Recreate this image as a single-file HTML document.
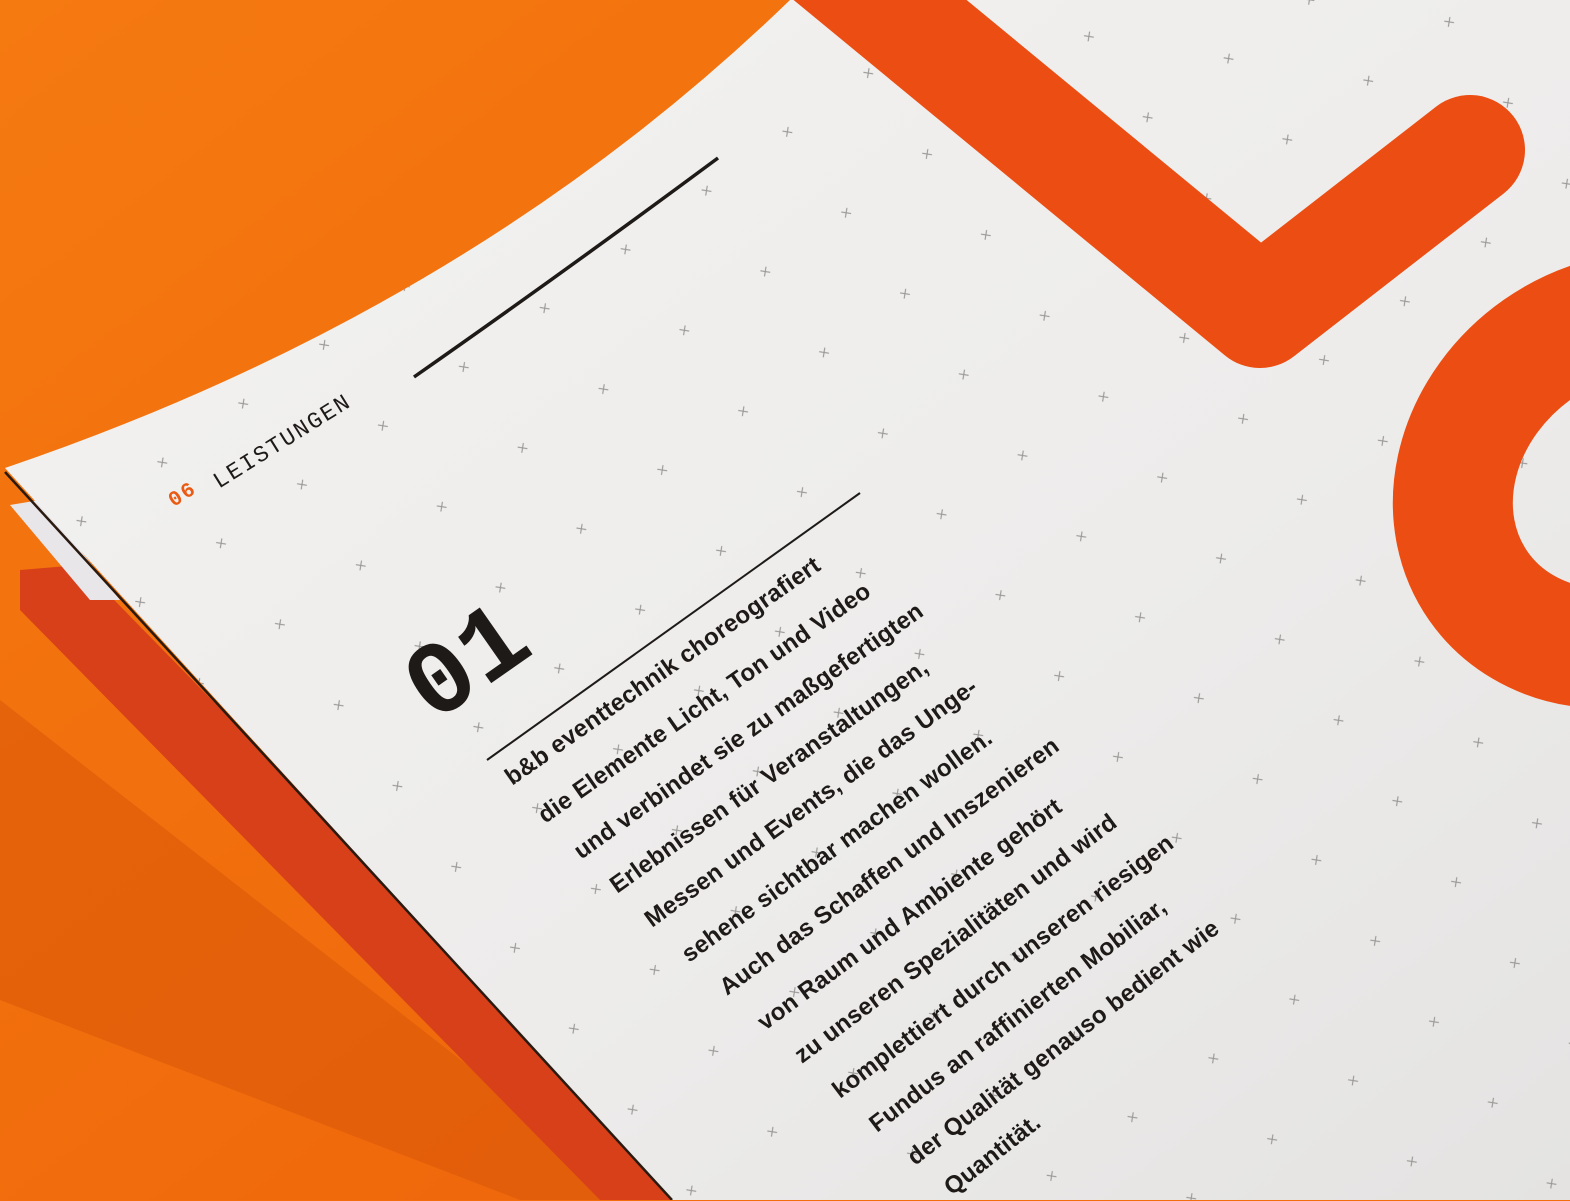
<!DOCTYPE html>
<html><head><meta charset="utf-8"><style>
html,body{margin:0;padding:0}
body{width:1570px;height:1200px;overflow:hidden;position:relative;background:#f36c0e;font-family:"Liberation Sans",sans-serif}
svg{position:absolute;left:0;top:0}
.t{position:absolute;white-space:nowrap;transform-origin:0 100%;font-weight:bold;color:#1e1a18;font-size:24px;line-height:24px;letter-spacing:0.3px}
</style></head><body>
<svg width="1570" height="1200" viewBox="0 0 1570 1200">
<defs>
<linearGradient id="bg" x1="0" y1="0" x2="1" y2="1">
<stop offset="0" stop-color="#f57a10"/><stop offset="0.6" stop-color="#f06a0c"/><stop offset="1" stop-color="#e8600a"/>
</linearGradient>
<linearGradient id="paper" x1="0" y1="0" x2="1" y2="1">
<stop offset="0" stop-color="#f3f2f0"/><stop offset="0.6" stop-color="#edeceb"/><stop offset="1" stop-color="#e4e3e2"/>
</linearGradient>
<pattern id="crs" width="100" height="100" patternUnits="userSpaceOnUse" patternTransform="rotate(-36) translate(10,20)">
<path d="M46 46l7 7M53 46l-7 7" stroke="#9a9896" stroke-width="1.2"/>
</pattern>
</defs>
<rect width="1570" height="1200" fill="url(#bg)"/>
<polygon points="0,700 0,1000 520,1200 640,1200" fill="#d85408" opacity="0.5"/>
<polygon points="20,570 80,565 700,1200 600,1200 20,610" fill="#d8401a"/>
<polygon points="10,505 40,500 120,600 90,600" fill="#e9e6ea"/>
<path d="M5,468 Q470,310 790,0 L1570,0 L1570,1200 L672,1200 Z" fill="url(#paper)"/>
<path d="M5,472 L672,1200" stroke="#2a1a10" stroke-width="2.5"/>
<path d="M5,468 Q470,310 790,0 L1570,0 L1570,1200 L672,1200 Z" fill="url(#crs)"/>
<polyline points="800,-66 1260,313 1470,150" fill="none" stroke="#ec4d12" stroke-width="110" stroke-linecap="round" stroke-linejoin="round"/>
<ellipse cx="1630" cy="480" rx="185" ry="160" transform="rotate(-35 1630 480)" fill="none" stroke="#ec4d12" stroke-width="120"/>
<path d="M414,377 Q560,275 718,158" stroke="#1e1a18" stroke-width="3.5" fill="none"/>
<path d="M487,760 Q670,630 860,493" stroke="#1e1a18" stroke-width="2" fill="none"/>
</svg>
<div class="t" style="left:178px;top:490px;font-family:'Liberation Mono',monospace;font-size:21px;letter-spacing:2px;font-weight:normal;transform:rotate(-33deg)"><span style="color:#ea5a14;font-weight:bold">06</span></div>
<div class="t" style="left:222px;top:470px;font-family:'Liberation Mono',monospace;font-size:23px;letter-spacing:2px;font-weight:normal;transform:rotate(-32deg)">LEISTUNGEN</div>
<div class="t" style="left:448px;top:640px;font-size:104px;line-height:104px;font-family:'Liberation Mono',monospace;transform:rotate(-35deg)">01</div>
<div class="t" style="left:515px;top:766px;transform:rotate(-35deg)">b&amp;b eventtechnik choreografiert</div>
<div class="t" style="left:548px;top:804px;transform:rotate(-35deg)">die Elemente Licht, Ton und Video</div>
<div class="t" style="left:584px;top:840px;transform:rotate(-35.5deg)">und verbindet sie zu maßgefertigten</div>
<div class="t" style="left:620px;top:874px;transform:rotate(-35.5deg)">Erlebnissen für Veranstaltungen,</div>
<div class="t" style="left:655px;top:908px;transform:rotate(-36deg)">Messen und Events, die das Unge-</div>
<div class="t" style="left:692px;top:943px;transform:rotate(-36deg)">sehene sichtbar machen wollen.</div>
<div class="t" style="left:730px;top:976px;transform:rotate(-36.5deg)">Auch das Schaffen und Inszenieren</div>
<div class="t" style="left:768px;top:1011px;transform:rotate(-36.5deg)">von Raum und Ambiente gehört</div>
<div class="t" style="left:805px;top:1044px;transform:rotate(-37deg)">zu unseren Spezialitäten und wird</div>
<div class="t" style="left:843px;top:1079px;transform:rotate(-37deg)">komplettiert durch unseren riesigen</div>
<div class="t" style="left:880px;top:1113px;transform:rotate(-37.5deg)">Fundus an raffinierten Mobiliar,</div>
<div class="t" style="left:918px;top:1146px;transform:rotate(-37.5deg)">der Qualität genauso bedient wie</div>
<div class="t" style="left:955px;top:1176px;transform:rotate(-38deg)">Quantität.</div>
</body></html>
